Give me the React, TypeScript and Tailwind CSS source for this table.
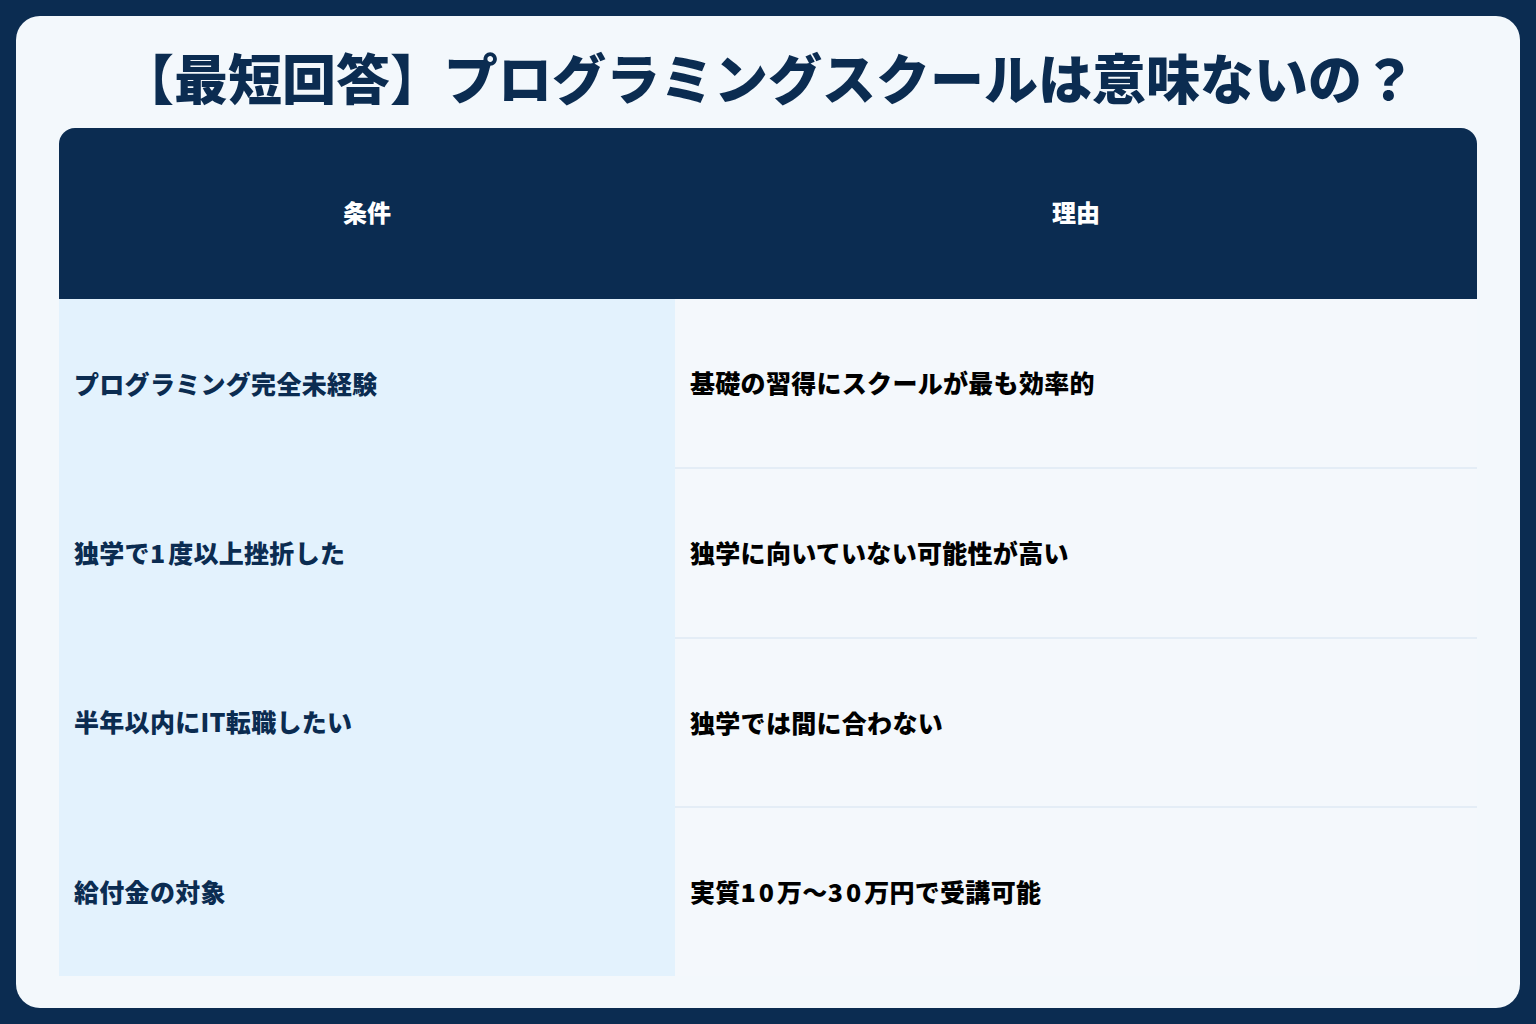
import React from "react";

const rows = [
  ["プログラミング完全未経験", "基礎の習得にスクールが最も効率的"],
  ["独学で1度以上挫折した", "独学に向いていない可能性が高い"],
  ["半年以内にIT転職したい", "独学では間に合わない"],
  ["給付金の対象", "実質10万〜30万円で受講可能"],
];

const font = { fontFamily: '"Noto Sans CJK JP", "Noto Sans", sans-serif' };

function Txt({ s }: { s: string }) {
  const parts = s.split(/([0-9]+)/);
  return (
    <>
      {parts.map((p, i) =>
        /^[0-9]+$/.test(p) ? (
          <span key={i} className="tracking-[3px]">
            {p}
          </span>
        ) : (
          <span key={i}>{p}</span>
        )
      )}
    </>
  );
}

export default function App() {
  return (
    <div className="w-[1536px] h-[1024px] bg-[#0b2c51] p-4" style={font}>
      <div className="w-full h-full bg-[#f3f8fc] rounded-[24px] px-[43px] pb-[32px] flex flex-col">
        <div className="h-[112px] pt-[10px] flex items-center justify-center">
          <h1 className="text-[54px] leading-none font-black text-[#0b2c51]">
            【最短回答】プログラミングスクールは意味ないの？
          </h1>
        </div>
        <div className="flex-1 flex flex-col">
          <div className="h-[171px] bg-[#0b2c51] rounded-t-[16px] grid grid-cols-[616px_1fr] text-white font-black text-[24px]">
            <div className="flex items-center justify-center pb-[4px]">条件</div>
            <div className="flex items-center justify-center pb-[4px]">理由</div>
          </div>
          <div className="flex-1 grid grid-cols-[616px_1fr]">
            <div className="bg-[#e3f2fd] flex flex-col">
              {rows.map((r, i) => (
                <div key={i} className="flex-1 flex items-center pl-[15px] text-[25px] tracking-[0.3px] font-black text-[#0b2c51]">
                  <Txt s={r[0]} />
                </div>
              ))}
            </div>
            <div className="flex flex-col">
              {rows.map((r, i) => (
                <div
                  key={i}
                  className={`flex-1 flex items-center pl-[15px] text-[25px] tracking-[0.3px] font-black text-[#000000] bg-[#f4f8fc] ${i < rows.length - 1 ? "border-b-2 border-[#e4edf6]" : ""}`}
                >
                  <Txt s={r[1]} />
                </div>
              ))}
            </div>
          </div>
        </div>
      </div>
    </div>
  );
}
